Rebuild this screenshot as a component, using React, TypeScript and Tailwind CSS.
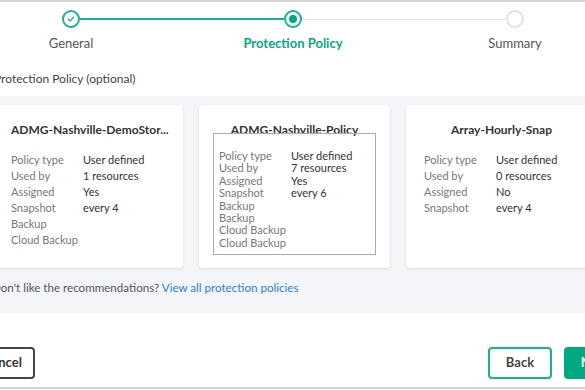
const GREEN = "#01a982";

type Row = [string, string];

function Step({ state, label }: { state: "done" | "active" | "todo"; label: string }) {
  return (
    <div className="flex flex-col items-center">
      <div className="h-[18px] flex items-center justify-center">
        {state === "done" && (
          <div className="w-[18px] h-[18px] rounded-full border-2 border-[#17b48e] bg-white flex items-center justify-center">
            <svg width="8" height="8" viewBox="0 0 8 8" fill="none">
              <path d="M1.3 4.2 L3.2 5.9 L6.6 2.2" stroke="#17b48e" strokeWidth="1.4" strokeLinecap="round" strokeLinejoin="round" />
            </svg>
          </div>
        )}
        {state === "active" && (
          <div className="w-[18px] h-[18px] rounded-full border-2 border-[#17b48e] bg-white flex items-center justify-center">
            <div className="w-[8px] h-[8px] rounded-full bg-[#01a982]" />
          </div>
        )}
        {state === "todo" && (
          <div className="w-[18px] h-[18px] rounded-full border-2 border-[#e2e2e2] bg-white" />
        )}
      </div>
      <div
        className={
          state === "active"
            ? "mt-[7px] text-[13px] leading-[16px] font-bold text-[#01a982]"
            : "mt-[7px] text-[13px] leading-[16px] text-[#555]"
        }
      >
        {label}
      </div>
    </div>
  );
}

function Rows({ rows, lh }: { rows: Row[]; lh: string }) {
  return (
    <div className={`text-[11px] ${lh}`}>
      {rows.map(([k, v], i) => (
        <div key={i} className="flex">
          <span className="w-[72px] shrink-0 text-[#777]">{k}</span>
          <span className="text-[#333]">{v}</span>
        </div>
      ))}
    </div>
  );
}

export default function App() {
  return (
    <div
      className="w-[585px] h-[390px] overflow-hidden bg-white border-t-2 border-[#d4d4d4]"
      style={{ fontFamily: "Lato, 'Noto Sans', sans-serif" }}
    >
      <div className="w-[666px] -ml-[40px]">
        {/* stepper */}
        <div className="relative pt-[8px] grid grid-cols-3">
          <div className="absolute top-[16px] left-[120px] right-[342px] h-[2px] bg-[#17b48e]" />
          <div className="absolute top-[17px] left-[342px] right-[120px] h-[1px] bg-[#e4e4e4]" />
          <div className="relative"><Step state="done" label="General" /></div>
          <div className="relative"><Step state="active" label="Protection Policy" /></div>
          <div className="relative"><Step state="todo" label="Summary" /></div>
        </div>

        <div className="pl-[34px] mt-[20px] text-[12px] leading-[16px] text-[#444]">
          Protection Policy (optional)
        </div>

        {/* recommendations panel */}
        <div className="mt-[9px] h-[217px] bg-[#f4f5f8] pt-[9px] pl-[32px]">
          <div className="flex gap-[16px]">
            <div className="w-[191px] h-[163px] bg-white rounded-[4px] shadow-[0_1px_3px_rgba(0,0,0,0.10)] pl-[19px] pt-[18px]">
              <div className="text-[12px] leading-[14px] font-bold text-[#333]">ADMG-Nashville-DemoStor...</div>
              <div className="mt-[15px]">
                <Rows
                  lh="leading-[16px]"
                  rows={[
                    ["Policy type", "User defined"],
                    ["Used by", "1 resources"],
                    ["Assigned", "Yes"],
                    ["Snapshot", "every 4"],
                    ["Backup", ""],
                    ["Cloud Backup", ""],
                  ]}
                />
              </div>
            </div>

            <div className="w-[191px] h-[163px] bg-white rounded-[4px] shadow-[0_1px_3px_rgba(0,0,0,0.10)] pt-[18px] flex flex-col items-center">
              <div className="text-[12px] leading-[14px] font-bold text-[#333]">ADMG-Nashville-Policy</div>
              <div className="-mt-[4px] w-[163px] h-[122px] border border-[#aaa] pl-[5px] pt-[16px]">
                <Rows
                  lh="leading-[12.4px]"
                  rows={[
                    ["Policy type", "User defined"],
                    ["Used by", "7 resources"],
                    ["Assigned", "Yes"],
                    ["Snapshot", "every 6"],
                    ["Backup", ""],
                    ["Backup", ""],
                    ["Cloud Backup", ""],
                    ["Cloud Backup", ""],
                  ]}
                />
              </div>
            </div>

            <div className="w-[191px] h-[163px] bg-white rounded-[4px] shadow-[0_1px_3px_rgba(0,0,0,0.10)] pt-[18px] flex flex-col items-center">
              <div className="text-[12px] leading-[14px] font-bold text-[#333]">Array-Hourly-Snap</div>
              <div className="mt-[15px] self-start pl-[18px]">
                <Rows
                  lh="leading-[16px]"
                  rows={[
                    ["Policy type", "User defined"],
                    ["Used by", "0 resources"],
                    ["Assigned", "No"],
                    ["Snapshot", "every 4"],
                  ]}
                />
              </div>
            </div>
          </div>
          <div className="mt-[12px] text-[11.6px] leading-[16px] text-[#555]">
            Don't like the recommendations?{" "}
            <span className="text-[#2d7fd6]">View all protection policies</span>
          </div>
        </div>

        {/* footer buttons */}
        <div className="mt-[34px] flex items-center pl-[10px]">
          <button className="w-[65px] h-[32px] rounded-[4px] border-2 border-[#444] text-[13px] font-bold text-[#333]">
            Cancel
          </button>
          <button className="ml-auto w-[64px] h-[32px] rounded-[4px] border-2 border-[#17b48e] text-[13px] font-bold text-[#444]">
            Back
          </button>
          <button
            className="ml-[12px] w-[62px] h-[32px] rounded-[4px] text-[13px] font-bold text-white"
            style={{ backgroundColor: GREEN }}
          >
            Next
          </button>
        </div>
        <div className="mt-[8px] h-[2px] bg-[#d4d4d4]" />
      </div>
    </div>
  );
}
